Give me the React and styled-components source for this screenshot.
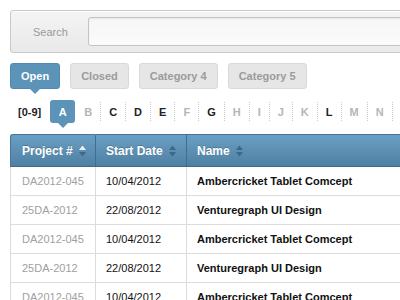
import React from "react";
import styled, { createGlobalStyle, css } from "styled-components";

const Global = createGlobalStyle`
  html, body { margin: 0; padding: 0; background: #fff; overflow: hidden; }
  body { font-family: "Liberation Sans", Arial, sans-serif; }
`;

const Page = styled.div`
  width: 640px;
  padding: 10px 0 0 10px;
  display: flex;
  flex-direction: column;
`;

const SearchBar = styled.div`
  height: 41px;
  border: 1px solid #c9c9c9;
  border-radius: 3px;
  background: linear-gradient(#f4f4f4, #e9e9e9);
  display: flex;
  align-items: center;
  box-shadow: inset 0 1px 0 #fff;
`;

const SearchLabel = styled.label`
  width: 77px;
  box-sizing: border-box;
  padding-left: 22px;
  font-size: 11px;
  color: #999;
`;

const SearchInput = styled.div`
  flex: 1;
  height: 27px;
  border: 1px solid #c4c4c4;
  border-radius: 3px;
  background: linear-gradient(#f6f6f6, #fbfbfb);
  box-shadow: inset 0 1px 2px rgba(0,0,0,0.06);
`;

const Tabs = styled.div`
  display: flex;
  gap: 10px;
  margin-top: 10px;
`;

const Tab = styled.div`
  position: relative;
  height: 26px;
  box-sizing: border-box;
  padding: 0 10px;
  border-radius: 3px;
  display: flex;
  align-items: center;
  font-size: 11px;
  font-weight: bold;
  ${(p) =>
    p.$active
      ? css`
          background: #5b93b9;
          border: 1px solid #5189af;
          color: #fff;
          &:after {
            content: "";
            position: absolute;
            left: 50%;
            bottom: -6px;
            margin-left: -6px;
            border-left: 6px solid transparent;
            border-right: 6px solid transparent;
            border-top: 6px solid #5b93b9;
          }
        `
      : css`
          background: #e6e6e6;
          border: 1px solid #d9d9d9;
          color: #9b9b9b;
        `}
`;

const Letters = styled.div`
  display: flex;
  margin-top: 11px;
  height: 23px;
  align-items: stretch;
`;

const Letter = styled.div`
  position: relative;
  box-sizing: border-box;
  display: flex;
  align-items: center;
  justify-content: center;
  padding: ${(p) => (p.$wide ? "0 9px 0 8px" : p.$active ? "0 8.5px" : "0 8px 0 9px")};
  font-size: 11px;
  font-weight: bold;
  color: ${(p) => (p.$active ? "#fff" : p.$dim ? "#b5b5b5" : "#222")};
  &:before {
    content: "";
    position: absolute;
    left: 0;
    top: 2px;
    bottom: 2px;
    border-left: 1px dotted #c8c8c8;
    display: ${(p) => (p.$wide || p.$active || p.$afterActive ? "none" : "block")};
  }
  ${(p) =>
    p.$active &&
    css`
      background: #5b93b9;
      border-radius: 3px;
      &:after {
        content: "";
        position: absolute;
        left: 50%;
        bottom: -5px;
        margin-left: -5px;
        border-left: 5px solid transparent;
        border-right: 5px solid transparent;
        border-top: 5px solid #5b93b9;
      }
    `}
`;

const Table = styled.div`
  margin-top: 11px;
  display: grid;
  grid-template-columns: 86px 91px 1fr;
`;

const Head = styled.div`
  height: 33px;
  box-sizing: border-box;
  background: linear-gradient(#6a9fc3, #4f80a3);
  border-top: 1px solid #45769a;
  border-bottom: 1px solid #3d6a8b;
  border-right: 1px solid #3f6e90;
  ${(p) => p.$first && css`border-left: 1px solid #45769a; border-top-left-radius: 3px;`}
  display: flex;
  align-items: center;
  gap: 6px;
  padding-left: ${(p) => (p.$first ? "11px" : "10px")};
  color: #fff;
  font-size: 12px;
  font-weight: bold;
  text-shadow: 0 -1px 0 rgba(0,0,0,0.2);
`;

const Cell = styled.div`
  height: 29px;
  box-sizing: border-box;
  border-bottom: 1px solid #dcdcdc;
  border-right: 1px solid #dcdcdc;
  ${(p) => p.$first && css`border-left: 1px solid #dcdcdc;`}
  display: flex;
  align-items: center;
  padding-left: ${(p) => (p.$first ? "11px" : "10px")};
  font-size: 11px;
  font-weight: ${(p) => (p.$bold ? "bold" : "normal")};
  color: ${(p) => (p.$muted ? "#a0a0a0" : "#111")};
`;

const SortIcon = ({ up }) => (
  <svg width="7" height="12" viewBox="0 0 7 12">
    <path d="M3.5 0.5 L7 5 L0 5 Z" fill={up ? "#e8f0f6" : "#3c6887"} />
    <path d="M0 7 L7 7 L3.5 11.5 Z" fill="#3c6887" />
  </svg>
);

const letters = ["A","B","C","D","E","F","G","H","I","J","K","L","M","N","O","P"];
const dim = new Set(["B","F","H","I","J","K","M","N","O"]);

const rows = [
  ["DA2012-045", "10/04/2012", "Ambercricket Tablet Comcept"],
  ["25DA-2012", "22/08/2012", "Venturegraph UI Design"],
  ["DA2012-045", "10/04/2012", "Ambercricket Tablet Comcept"],
  ["25DA-2012", "22/08/2012", "Venturegraph UI Design"],
  ["DA2012-045", "10/04/2012", "Ambercricket Tablet Comcept"],
];

export default function App() {
  return (
    <>
      <Global />
      <Page>
        <SearchBar>
          <SearchLabel>Search</SearchLabel>
          <SearchInput />
        </SearchBar>
        <Tabs>
          <Tab $active>Open</Tab>
          <Tab>Closed</Tab>
          <Tab>Category 4</Tab>
          <Tab>Category 5</Tab>
        </Tabs>
        <Letters>
          <Letter $wide>[0-9]</Letter>
          {letters.map((l, i) => (
            <Letter key={l} $active={l === "A"} $afterActive={i === 1} $dim={dim.has(l)}>
              {l}
            </Letter>
          ))}
        </Letters>
        <Table>
          <Head $first>Project # <SortIcon up /></Head>
          <Head>Start Date <SortIcon /></Head>
          <Head>Name <SortIcon /></Head>
          {rows.map((r, i) => (
            <React.Fragment key={i}>
              <Cell $first $muted>{r[0]}</Cell>
              <Cell>{r[1]}</Cell>
              <Cell $bold>{r[2]}</Cell>
            </React.Fragment>
          ))}
        </Table>
      </Page>
    </>
  );
}
